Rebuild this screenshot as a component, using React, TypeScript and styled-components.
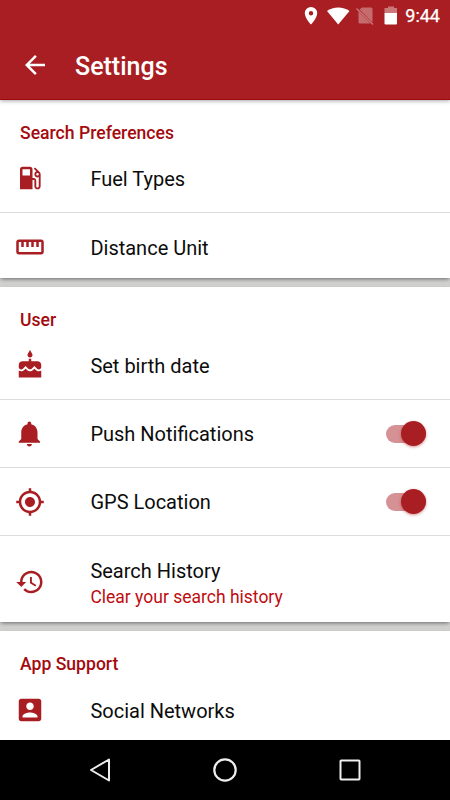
import React from "react";
import styled, { createGlobalStyle } from "styled-components";

const RED = "#a81e22";
const DEEP = "#a50a0e";

const Global = createGlobalStyle`
  *{box-sizing:border-box}
  body{margin:0;font-family:Roboto,"Liberation Sans",sans-serif;background:#d1d1cf}
`;
const Screen = styled.div`
  width:450px;height:800px;display:flex;flex-direction:column;overflow:hidden;background:#d1d1cf;
`;
const Header = styled.header`
  height:100px;flex:none;background:${RED};color:#fff;z-index:1;
  border-bottom:1px solid #9c0a0d;box-shadow:0 1px 4px rgba(0,0,0,.35);
`;
const StatusBar = styled.div`
  height:30px;display:flex;justify-content:flex-end;align-items:center;padding:1px 10px 0 0;
`;
const Clock = styled.span`
  font-size:18px;line-height:30px;font-weight:400;margin-left:8px;-webkit-text-stroke:.25px #fff;
`;
const TitleBar = styled.div`
  height:70px;display:flex;align-items:center;padding-left:20px;
`;
const Title = styled.h1`
  margin:3px 0 0 25px;font-size:25px;font-weight:500;line-height:30px;
`;
const Content = styled.main`
  flex:1;min-height:0;overflow:hidden;display:flex;flex-direction:column;gap:9px;
`;
const Card = styled.section<{ $h: number }>`
  height:${(p) => p.$h}px;flex:none;background:#fff;box-shadow:0 2px 4px -1px rgba(0,0,0,.5);
`;
const Heading = styled.h2`
  margin:0;padding:22px 0 0 20px;height:45px;font-size:17.6px;line-height:22px;font-weight:500;color:${DEEP};
`;
const Row = styled.div<{ $h?: number; $line?: boolean }>`
  height:${(p) => p.$h ?? 68}px;display:flex;align-items:center;padding:0 24px 0 15px;
  border-bottom:${(p) => (p.$line ? "1px solid #dcdcdc" : "none")};
`;
const Labels = styled.div`
  flex:1;margin-left:45.4px;padding-top:1px;
`;
const Label = styled.div`
  font-size:20px;line-height:26px;color:#0c0c0c;white-space:nowrap;
`;
const SubLabel = styled.div`
  font-size:17.5px;line-height:26px;margin-bottom:-2px;color:#c00c10;white-space:nowrap;
`;
const Svg = styled.svg<{ $lift?: number }>`
  display:block;flex:none;margin-bottom:${(p) => (p.$lift ?? 0) * 2}px;
`;
const Track = styled.div`
  width:40px;height:18px;border-radius:9px;background:#d69194;display:flex;align-items:center;justify-content:flex-end;
`;
const Thumb = styled.div`
  width:25px;height:25px;border-radius:50%;background:${RED};flex:none;box-shadow:0 1px 3px rgba(168,30,34,.5);
`;
const NavBar = styled.nav`
  height:60px;flex:none;background:#000;display:flex;align-items:center;justify-content:space-between;padding:0 85px;
`;

const Icon = ({ d, color = RED, lift }: { d: string; color?: string; lift?: number }) => (
  <Svg width={30} height={30} viewBox="0 0 24 24" fill={color} $lift={lift}>
    <path d={d} fillRule="evenodd" />
  </Svg>
);

const paths = {
  back: "M20 11H7.83l5.59-5.59L12 4l-8 8 8 8 1.41-1.41L7.83 13H20v-2z",
  fuel: "M19.77 7.23l.01-.01-3.72-3.72L15 4.56l2.11 2.11c-.94.36-1.61 1.26-1.61 2.33 0 1.38 1.12 2.5 2.5 2.5.36 0 .69-.08 1-.21v7.21c0 .55-.45 1-1 1s-1-.45-1-1V14c0-1.1-.9-2-2-2h-1V5c0-1.1-.9-2-2-2H6c-1.1 0-2 .9-2 2v16h10v-7.5h1.5v5c0 1.38 1.12 2.5 2.5 2.5s2.5-1.12 2.5-2.5V9c0-.69-.28-1.32-.73-1.77zM12 10H6V5h6v5zm6 0c-.55 0-1-.45-1-1s.45-1 1-1 1 .45 1 1-.45 1-1 1z",
  ruler: "M21 6H3c-1.1 0-2 .9-2 2v8c0 1.1.9 2 2 2h18c1.1 0 2-.9 2-2V8c0-1.1-.9-2-2-2zm0 10H3V8h2v4h2V8h2v4h2V8h2v4h2V8h2v4h2V8h2v8z",
  cake: "M12 6c1.11 0 2-.9 2-2 0-.38-.1-.73-.29-1.03L12 0l-1.71 2.97c-.19.3-.29.65-.29 1.03 0 1.1.9 2 2 2zm4.6 9.99l-1.07-1.07-1.08 1.07c-1.3 1.3-3.58 1.31-4.89 0l-1.07-1.07-1.09 1.07C6.75 16.64 5.88 17 4.96 17c-.73 0-1.4-.23-1.96-.61V22h18v-5.61c-.56.38-1.23.61-1.96.61-.92 0-1.79-.36-2.44-1.01zM18 9h-5V7h-2v2H6c-1.66 0-3 1.34-3 3v1.54c0 1.08.88 1.96 1.96 1.96.52 0 1.02-.2 1.38-.57l2.14-2.13 2.13 2.13c.74.74 2.03.74 2.77 0l2.14-2.13 2.13 2.13c.37.37.86.57 1.38.57 1.08 0 1.96-.88 1.96-1.96V12C21 10.34 19.66 9 18 9z",
  bell: "M11.5 22c1.1 0 2-.9 2-2h-4c0 1.1.9 2 2 2zm6.5-6v-5.5c0-3.07-2.13-5.64-5-6.32V3.5c0-.83-.67-1.5-1.5-1.5S10 2.67 10 3.5v.68c-2.87.68-5 3.25-5 6.32V16l-2 2v1h17v-1l-2-2z",
  gps: "M12 8c-2.21 0-4 1.79-4 4s1.79 4 4 4 4-1.79 4-4-1.79-4-4-4zm8.94 3c-.46-4.17-3.77-7.48-7.94-7.94V1h-2v2.06C6.83 3.52 3.52 6.83 3.06 11H1v2h2.06c.46 4.17 3.77 7.48 7.94 7.94V23h2v-2.06c4.17-.46 7.48-3.77 7.94-7.94H23v-2h-2.06zM12 19c-3.87 0-7-3.13-7-7s3.13-7 7-7 7 3.13 7 7-3.13 7-7 7z",
  history: "M13 3c-4.97 0-9 4.03-9 9H1l3.89 3.89.07.14L9 12H6c0-3.87 3.13-7 7-7s7 3.13 7 7-3.13 7-7 7c-1.93 0-3.68-.79-4.94-2.06l-1.42 1.42C8.27 19.99 10.51 21 13 21c4.97 0 9-4.03 9-9s-4.03-9-9-9zm-1 5v5l4.28 2.54.72-1.21-3.5-2.08V8H12z",
  person: "M3 5v14c0 1.1.89 2 2 2h14c1.1 0 2-.9 2-2V5c0-1.1-.9-2-2-2H5c-1.11 0-2 .9-2 2zm12 4c0 1.66-1.34 3-3 3s-3-1.34-3-3 1.34-3 3-3 3 1.34 3 3zm-9 8c0-2 4-3.1 6-3.1s6 1.1 6 3.1v1H6v-1z",
};

const StatusIcons = () => (
  <Svg width="94" height="22" viewBox="0 0 94 22" fill="#fff">
    <path fillRule="evenodd" d="M8 2a6.200 6.200 0 0 0-6.200 6.200c0 4.700 6.200 11.300 6.200 11.300s6.200-6.600 6.200-11.300A6.200 6.200 0 0 0 8 2zm0 4a2.200 2.200 0 1 1 0 4.400A2.200 2.200 0 0 1 8 6z" />
    <path d="M24 6C30 1.300 40.500 1.300 46.500 6L35.200 19.500z" />
    <path opacity=".35" d="M59 2.500h9a1.500 1.500 0 0 1 1.500 1.500v13.500L56.500 4.500zM55.500 6.500 67.500 18.500H57A1.500 1.500 0 0 1 55.500 17z" />
    <path d="M53.500 3.500 70 19.500" stroke="#fff" strokeOpacity=".4" strokeWidth="1.300" fill="none" />
    <path opacity=".4" d="M81.500 3H85V1.500h6V3h3.500v5h-13z" />
    <path d="M81.500 8H94v10.500a1 1 0 0 1-1 1H82.500a1 1 0 0 1-1-1z" />
  </Svg>
);

const Switch = () => (
  <Track>
    <Thumb />
  </Track>
);

const Item = ({ icon, label, sub, toggle, line, h, lift }: {
  icon: keyof typeof paths; label: string; sub?: string; toggle?: boolean; line?: boolean; h?: number; lift?: number;
}) => (
  <Row $h={h} $line={line}>
    <Icon d={paths[icon]} lift={lift} />
    <Labels>
      <Label>{label}</Label>
      {sub && <SubLabel>{sub}</SubLabel>}
    </Labels>
    {toggle && <Switch />}
  </Row>
);

export default function App() {
  return (
    <Screen>
      <Global />
      <Header>
        <StatusBar>
          <StatusIcons />
          <Clock>9:44</Clock>
        </StatusBar>
        <TitleBar>
          <Icon d={paths.back} color="#fff" />
          <Title>Settings</Title>
        </TitleBar>
      </Header>
      <Content>
        <Card $h={178}>
          <Heading>Search Preferences</Heading>
          <Item icon="fuel" label="Fuel Types" line lift={0.5} />
          <Item icon="ruler" label="Distance Unit" lift={0.5} />
        </Card>
        <Card $h={335}>
          <Heading>User</Heading>
          <Item icon="cake" label="Set birth date" line lift={1} />
          <Item icon="bell" label="Push Notifications" toggle line />
          <Item icon="gps" label="GPS Location" toggle line />
          <Item icon="history" label="Search History" sub="Clear your search history" h={92} />
        </Card>
        <Card $h={178}>
          <Heading>App Support</Heading>
          <Item icon="person" label="Social Networks" lift={0.5} />
        </Card>
      </Content>
      <NavBar>
        <Svg width="30" height="30" viewBox="0 0 30 30" fill="none" stroke="#eee" strokeWidth="2" strokeLinejoin="round">
          <path d="M6 15 24 4.500V25.500z" />
        </Svg>
        <Svg width="30" height="30" viewBox="0 0 30 30" fill="none" stroke="#eee" strokeWidth="2.200">
          <circle cx="15" cy="15" r="10.700" />
        </Svg>
        <Svg width="30" height="30" viewBox="0 0 30 30" fill="none" stroke="#eee" strokeWidth="2">
          <rect x="5.500" y="5.500" width="19" height="19" rx=".7" />
        </Svg>
      </NavBar>
    </Screen>
  );
}
